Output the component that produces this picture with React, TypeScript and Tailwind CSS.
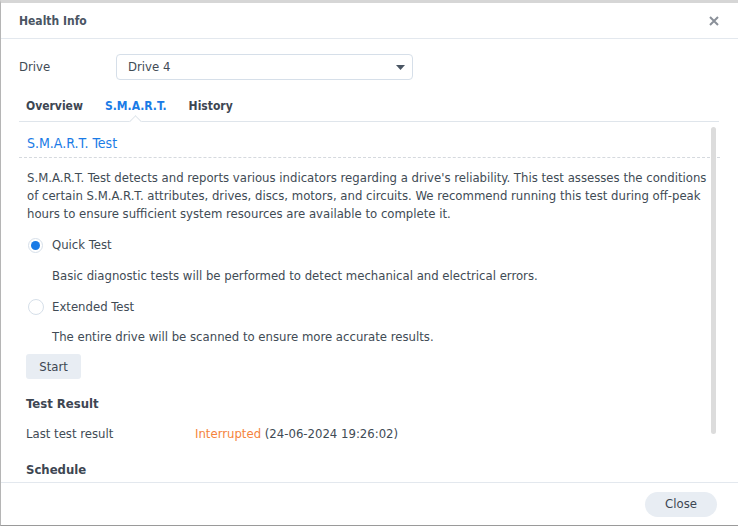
import React from "react";

const font = { fontFamily: '"DejaVu Sans Condensed", "DejaVu Sans", sans-serif' };

export default function App() {
  return (
    <div className="w-[738px] h-[526px] bg-white overflow-hidden" style={font}>
      <div className="h-full flex flex-col border-l border-l-[#b5b5b5] border-t-[3px] border-t-[#d6d6d6] border-b border-b-[#9a9a9a] text-[#414b55] text-[12px]">
        {/* header */}
        <div className="h-[36px] flex items-center justify-between pl-[18px] pr-[18px] border-b border-[#e3e8ee] shrink-0">
          <span className="font-bold text-[12px] text-[#4a5563]">Health Info</span>
          <svg width="10" height="10" viewBox="0 0 10 10" className="mr-[1px]">
            <path d="M1 1 L9 9 M9 1 L1 9" stroke="#8a9099" strokeWidth="2" />
          </svg>
        </div>
        {/* drive */}
        <div className="flex items-center pl-[18px] pt-[15px] shrink-0">
          <span className="w-[97px] text-[13px]">Drive</span>
          <div className="w-[297px] h-[26px] border border-[#d6dfe9] rounded-[4px] flex items-center justify-between pl-[11px] pr-[7px] text-[13px]">
            <span>Drive 4</span>
            <svg width="9" height="5" viewBox="0 0 9 5"><path d="M0 0 H9 L4.5 5 Z" fill="#4a5563" /></svg>
          </div>
        </div>
        {/* tabs */}
        <div className="mx-[18px] mr-[19px] mt-[12px] h-[30px] border-b border-[#dfe5eb] relative flex items-center gap-[22px] pl-[7px] pb-[2px] text-[12px] font-bold shrink-0">
          <span className="text-[#3d4652]">Overview</span>
          <span className="text-[#1a7be6]">S.M.A.R.T.</span>
          <span className="text-[#3d4652]">History</span>
          <div className="absolute left-[112px] bottom-[-5px] w-[9px] h-[9px] bg-white border-l border-t border-[#dfe5eb] rotate-45" />
        </div>
        {/* body */}
        <div className="flex-1 relative min-h-0 overflow-hidden">
          <div className="absolute right-[22px] top-[5px] w-[5px] h-[307px] rounded-full bg-[#dcdcdc]" />
          <div className="pl-[18px] pr-[18px]">
            <div className="pt-[11px] pb-[3px] border-b border-dashed border-[#d5d9de] pl-[8px]">
              <span className="text-[14px] text-[#1a7be6]">S.M.A.R.T. Test</span>
            </div>
            <div className="pl-[8px] pr-[0px] mt-[11px] leading-[18px] text-[13px]">
              S.M.A.R.T. Test detects and reports various indicators regarding a drive's reliability. This test assesses the conditions of certain S.M.A.R.T. attributes, drives, discs, motors, and circuits. We recommend running this test during off-peak hours to ensure sufficient system resources are available to complete it.
            </div>
            <div className="pl-[9px] text-[13px]">
              <div className="flex items-center mt-[13px] h-[18px]">
                <span className="w-[15px] h-[15px] rounded-full border border-[#d6dfe9] flex items-center justify-center mr-[9px]">
                  <span className="w-[9px] h-[9px] rounded-full bg-[#1a7be6]" />
                </span>
                Quick Test
              </div>
              <div className="pl-[24px] mt-[13px] h-[18px] leading-[18px]">Basic diagnostic tests will be performed to detect mechanical and electrical errors.</div>
              <div className="flex items-center mt-[13px] h-[18px]">
                <span className="w-[16px] h-[16px] rounded-full border border-[#d6dfe9] mr-[8px]" />
                Extended Test
              </div>
              <div className="pl-[24px] mt-[12px] h-[18px] leading-[18px]">The entire drive will be scanned to ensure more accurate results.</div>
            </div>
            <div className="pl-[7px] mt-[8px]">
              <button className="w-[55px] h-[25px] rounded-[3px] bg-[#e8edf3] text-[13px] text-[#3d4652]" style={font}>Start</button>
            </div>
            <div className="pl-[7px] mt-[16px] font-bold text-[13px] leading-[18px] text-[#3d4652]">Test Result</div>
            <div className="pl-[7px] mt-[12px] flex text-[13px] leading-[18px]">
              <span className="w-[169px]">Last test result</span>
              <span><span className="text-[#f5833b]">Interrupted</span> (24-06-2024 19:26:02)</span>
            </div>
            <div className="pl-[7px] mt-[18px] font-bold text-[13px] leading-[18px] text-[#3d4652]">Schedule</div>
          </div>
        </div>
        {/* footer */}
        <div className="h-[43px] border-t border-[#e3e8ee] flex items-center justify-end pr-[21px] shrink-0">
          <button className="w-[72px] h-[25px] rounded-full bg-[#e8edf3] text-[13px] text-[#3d4652]" style={font}>Close</button>
        </div>
      </div>
    </div>
  );
}
